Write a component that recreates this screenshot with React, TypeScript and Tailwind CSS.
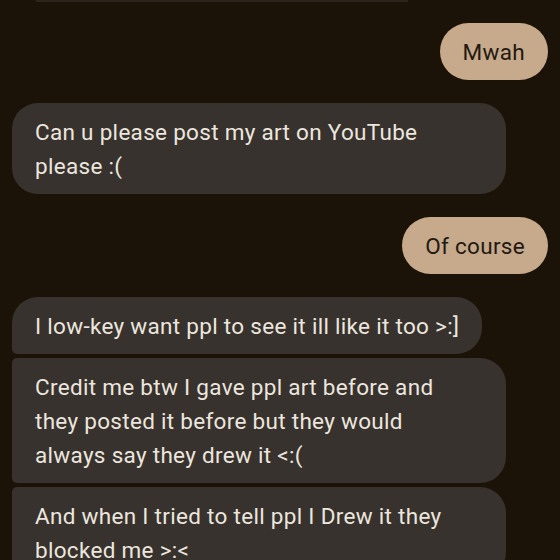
const received = "bg-[#37322d] text-[#ece6df]";
const sent = "bg-[#c7a98c] text-[#221a11]";

type Msg = {
  text: string;
  mine?: boolean;
  corners: string;
  gap: string;
  pad?: string;
};

const messages: Msg[] = [
  { text: "Mwah", mine: true, corners: "rounded-full", gap: "mt-[21px]" },
  {
    text: "Can u please post my art on YouTube please :(",
    corners: "rounded-[26px]",
    gap: "mt-[23px]",
  },
  { text: "Of course", mine: true, corners: "rounded-full", gap: "mt-[23px]" },
  {
    text: "I low-key want ppl to see it ill like it too >:]",
    corners: "rounded-tl-[26px] rounded-tr-[26px] rounded-br-[26px] rounded-bl-[5px]",
    gap: "mt-[23px]",
  },
  {
    text: "Credit me btw I gave ppl art before and they posted it before but they would always say they drew it <:(",
    corners: "rounded-tl-[5px] rounded-bl-[5px] rounded-tr-[26px] rounded-br-[26px]",
    gap: "mt-[4px]",
    pad: "pl-[23px] pr-[40px]",
  },
  {
    text: "And when I tried to tell ppl I Drew it they blocked me >:<",
    corners: "rounded-tl-[5px] rounded-bl-[5px] rounded-tr-[26px] rounded-br-[26px]",
    gap: "mt-[4px]",
  },
];

const App = () => {
  return (
    <div
      className="w-[560px] h-[560px] overflow-hidden bg-[#1c1308] flex flex-col"
      style={{ fontFamily: "Roboto, 'Noto Sans', sans-serif" }}
    >
      <div className="ml-[36px] w-[372px] h-[2px] bg-[#2c251c] shrink-0" />

      {messages.map((m, i) => (
        <div
          key={i}
          className={`flex shrink-0 ${m.gap} ${m.mine ? "justify-end pr-[12px]" : "justify-start pl-[12px]"}`}
        >
          <div
            className={`${m.mine ? sent : received} ${m.corners} ${m.pad ?? "px-[23px]"} max-w-[494px] py-[11.5px] text-[22.5px] leading-[34px] tracking-[0.3px]`}
          >
            {m.text}
          </div>
        </div>
      ))}
    </div>
  );
};

export default App;
